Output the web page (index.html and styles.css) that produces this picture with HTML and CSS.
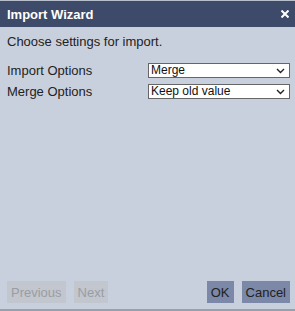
FILE: index.html
```html
<!DOCTYPE html>
<html lang="en">
<head>
    <meta charset="UTF-8">
    <meta name="viewport" content="width=device-width, initial-scale=1.0">
    <title>Import Wizard</title>
    <link rel="stylesheet" href="styles.css">
</head>
<body>
    <div class="dialog">
        <div class="titlebar">
            <span class="title">Import Wizard</span>
            <svg class="close" width="8" height="8" viewBox="0 0 8 8">
                <path d="M0.5 0.5 L7.5 7.5 M7.5 0.5 L0.5 7.5" stroke="white" stroke-width="2"/>
            </svg>
        </div>
        <div class="content">
            <p class="intro">Choose settings for import.</p>
            <div class="row">
                <label for="importOpt">Import Options</label>
                <select id="importOpt" class="opt">
                    <option>Merge</option>
                    <option>Replace</option>
                </select>
            </div>
            <div class="row">
                <label for="mergeOpt">Merge Options</label>
                <select id="mergeOpt" class="opt">
                    <option>Keep old value</option>
                    <option>Use new value</option>
                </select>
            </div>
        </div>
        <div class="buttons">
            <button class="btn" disabled>Previous</button>
            <button class="btn" disabled>Next</button>
            <span class="spacer"></span>
            <button class="btn">OK</button>
            <button class="btn">Cancel</button>
        </div>
    </div>
</body>
</html>
```

FILE: styles.css
```css
html, body {
    margin: 0;
    height: 100%;
}
body {
    font-family: "Liberation Sans", Arial, sans-serif;
    background-color: #c9d0dd;
}
.dialog {
    display: flex;
    flex-direction: column;
    height: 100%;
    box-sizing: border-box;
    border-top: 1px solid #b8bfcc;
    border-bottom: 2px solid #9aa0ab;
}
.titlebar {
    display: flex;
    align-items: center;
    justify-content: space-between;
    height: 26px;
    padding: 0 6px 0 7px;
    background-color: #3d4a69;
    color: white;
}
.title {
    font-size: 13px;
    font-weight: bold;
}
.close {
    display: block;
}
.content {
    flex: 1;
    padding: 0 5px 0 7px;
}
.intro {
    margin: 7px 0 14px;
    font-size: 13px;
    line-height: 15px;
    color: #222;
}
.row {
    display: flex;
    align-items: center;
    margin-bottom: 6px;
    font-size: 13px;
    color: #222;
}
.row label {
    width: 141px;
}
.opt {
    flex: 1;
    height: 15px;
    padding: 0 2px;
    border: 1px solid #666;
    border-radius: 0;
    appearance: none;
    -webkit-appearance: none;
    background: white url("data:image/svg+xml,%3Csvg xmlns='http://www.w3.org/2000/svg' width='9' height='6' viewBox='0 0 9 6'%3E%3Cpath d='M1 1 L4.5 4.5 L8 1' fill='none' stroke='%23222' stroke-width='1.4'/%3E%3C/svg%3E") no-repeat right 4px center;
    font-family: inherit;
    font-size: 12px;
    line-height: 13px;
    color: #111;
}
.buttons {
    display: flex;
    gap: 8px;
    padding: 0 5px 6px 7px;
}
.spacer {
    flex: 1;
}
.btn {
    height: 22px;
    padding: 0 4px;
    border: none;
    background-color: #7b88a8;
    font-family: inherit;
    font-size: 13px;
    color: #222;
}
.btn:disabled {
    background-color: #c2c6ce;
    color: #9a9da3;
}
```
